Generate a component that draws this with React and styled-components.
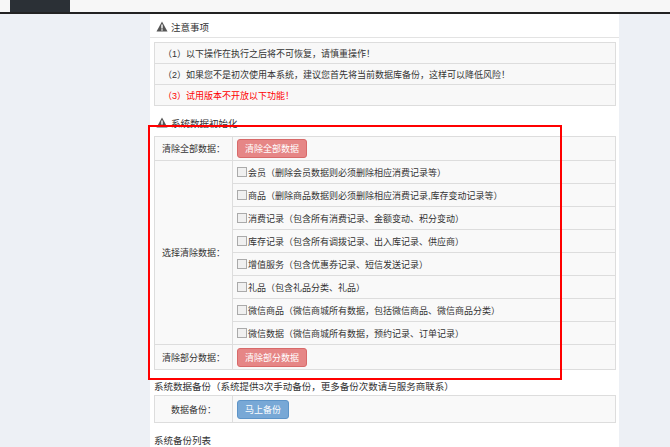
import styled, { createGlobalStyle } from "styled-components"

const Global = createGlobalStyle`
  body { margin: 0; background: #edf0f5; font-family: "Liberation Sans", "Noto Sans CJK SC", sans-serif; font-size: 9px; color: #333; }
`

const TopBar = styled.div`
  height: 12px;
  background: #f7f7f7;
  border-bottom: 2px solid #222;
  padding-left: 10px;
`

const Tab = styled.div`
  width: 60px;
  height: 12px;
  background: #2b3036;
`

const Panel = styled.div`
  width: 469px;
  margin-left: 150px;
  background: #fff;
  min-height: 433px;
  padding-bottom: 10px;
`

const Heading = styled.div`
  display: flex;
  align-items: center;
  gap: 3px;
  height: 21px;
  padding: 2px 6px 0;
  font-size: 9.5px;
  border-bottom: ${p => (p.$line ? "1px solid #e3e3e3" : "none")};
`

const Notes = styled.div`
  margin: 4px 3px 0 4px;
  border: 1px solid #ddd;
`

const Note = styled.div`
  height: 20px;
  display: flex;
  align-items: center;
  padding-left: 8px;
  background: #f8f8f8;
  color: ${p => (p.$red ? "#f00" : "#333")};
  & + & { border-top: 1px solid #ddd; }
`

const Highlight = styled.div`
  position: relative;
  margin-top: 3px;
`

const RedBox = styled.div`
  position: absolute;
  left: -2px;
  top: -11px;
  width: 410px;
  height: 251px;
  border: 2px solid #f00;
  pointer-events: none;
`

const Table = styled.div`
  margin: 0 3px 0 4px;
  border: 1px solid #ddd;
  display: grid;
  grid-template-columns: 78px 1fr;
`

const Label = styled.div`
  display: flex;
  align-items: center;
  justify-content: center;
  border-right: 1px solid #ddd;
  border-top: ${p => (p.$first ? "none" : "1px solid #ddd")};
  background: #f9f9f9;
  grid-row: span ${p => p.$span || 1};
`

const Cell = styled.div`
  height: ${p => p.$h || 22}px;
  display: flex;
  align-items: center;
  padding-left: 4px;
  background: #f9f9f9;
  border-top: ${p => (p.$first ? "none" : "1px solid #ddd")};
`

const Btn = styled.div`
  height: 17px;
  padding: 0 7px;
  display: flex;
  align-items: center;
  border-radius: 3px;
  color: #fff;
  font-size: 9px;
  background: ${p => (p.$blue ? "#78a8d6" : "#e68686")};
  border: 1px solid ${p => (p.$blue ? "#5d94c8" : "#d86a6a")};
`

const Box = styled.span`
  width: 8px;
  height: 8px;
  border: 1px solid #aaa;
  background: #f0f0f0;
  margin-right: 1px;
`

const Plain = styled.div`
  padding: ${p => p.$top || 6}px 4px 2px;
  font-size: 9.5px;
`

const Warn = () => (
  <svg width="12" height="11" viewBox="0 0 12 11">
    <path d="M6 0.5L11.5 10.5H0.5Z" fill="#555" />
    <rect x="5.3" y="3.5" width="1.4" height="4" fill="#fff" />
    <rect x="5.3" y="8.3" width="1.4" height="1.3" fill="#fff" />
  </svg>
)

const items = [
  "会员（删除会员数据则必须删除相应消费记录等）",
  "商品（删除商品数据则必须删除相应消费记录,库存变动记录等）",
  "消费记录（包含所有消费记录、金额变动、积分变动）",
  "库存记录（包含所有调拨记录、出入库记录、供应商）",
  "增值服务（包含优惠券记录、短信发送记录）",
  "礼品（包含礼品分类、礼品）",
  "微信商品（微信商城所有数据，包括微信商品、微信商品分类）",
  "微信数据（微信商城所有数据，预约记录、订单记录）",
]

export default function App() {
  return (
    <>
      <Global />
      <TopBar><Tab /></TopBar>
      <Panel>
        <Heading $line><Warn />注意事项</Heading>
        <Notes>
          <Note>（1）以下操作在执行之后将不可恢复，请慎重操作！</Note>
          <Note>（2）如果您不是初次使用本系统，建议您首先将当前数据库备份，这样可以降低风险！</Note>
          <Note $red>（3）试用版本不开放以下功能！</Note>
        </Notes>
        <Heading style={{ marginTop: 4 }}><Warn />系统数据初始化</Heading>
        <Highlight>
          <RedBox />
          <Table>
            <Label $first>清除全部数据：</Label>
            <Cell $first $h={23}><Btn>清除全部数据</Btn></Cell>
            <Label $span={8}>选择清除数据：</Label>
            {items.map(t => (
              <Cell key={t}><Box />{t}</Cell>
            ))}
            <Label>清除部分数据：</Label>
            <Cell $h={24}><Btn>清除部分数据</Btn></Cell>
          </Table>
        </Highlight>
        <Plain $top={9}>系统数据备份（系统提供3次手动备份，更多备份次数请与服务商联系）</Plain>
        <Table>
          <Label $first>数据备份：</Label>
          <Cell $first $h={26}><Btn $blue>马上备份</Btn></Cell>
        </Table>
        <Plain $top={10}>系统备份列表</Plain>
      </Panel>
    </>
  )
}
